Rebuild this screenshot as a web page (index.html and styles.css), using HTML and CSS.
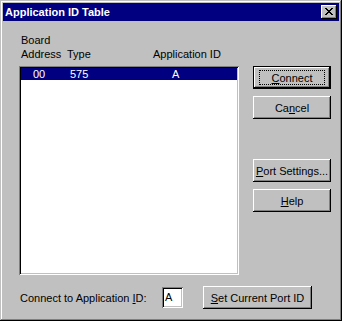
FILE: index.html
```html
<!DOCTYPE html>
<html>
    <head>
        <meta charset="utf-8">
        <title>Application ID Table</title>
        <link rel="stylesheet" href="styles.css">
    </head>
    <body>
        <div class="window">
            <div class="title_bar">
                <span class="title_text">Application ID Table</span>
                <span class="close_btn">
                    <svg width="8" height="7" viewBox="0 0 8 7">
                        <path d="M0 0h2v1h1v1h2v-1h1v-1h2v1h-1v1h-1v1h-1v1h1v1h1v1h1v1h-2v-1h-1v-1h-2v1h-1v1h-2v-1h1v-1h1v-1h1v-1h-1v-1h-1v-1h-1z" fill="#000"/>
                    </svg>
                </span>
            </div>
            <div class="content">
                <div class="main">
                    <div class="left">
                        <div class="head">
                            <div class="col_addr">Board<br>Address</div>
                            <div class="col_type">Type</div>
                            <div class="col_app">Application ID</div>
                        </div>
                        <div class="list">
                            <div class="row selected">
                                <span class="cell_addr">00</span>
                                <span class="cell_type">575</span>
                                <span class="cell_app">A</span>
                            </div>
                        </div>
                    </div>
                    <div class="right">
                        <div class="btn default"><span class="focus"><u>C</u>onnect</span></div>
                        <div class="btn">Ca<u>n</u>cel</div>
                        <div class="btn gap_top"><u>P</u>ort Settings...</div>
                        <div class="btn"><u>H</u>elp</div>
                    </div>
                </div>
                <div class="bottom">
                    <span class="label">Connect to Application <u>I</u>D:</span>
                    <span class="field">A</span>
                    <div class="btn wide"><u>S</u>et Current Port ID</div>
                </div>
            </div>
        </div>
    </body>
</html>
```
FILE: styles.css
```css
body {
    margin:0;
    background:#c0c0c0;
    font-family:"Liberation Sans", Arial, sans-serif;
    font-size:11px;
    color:#000;
}
.window {
    width:342px;
    height:321px;
    box-sizing:border-box;
    padding:3px;
    display:flex;
    flex-direction:column;
    background:#c0c0c0;
    box-shadow:inset -1px -1px #000, inset 1px 1px #c0c0c0, inset -2px -2px #808080, inset 2px 2px #fff;
}
.title_bar {
    height:18px;
    background:#000080;
    display:flex;
    align-items:center;
    justify-content:space-between;
    padding:0 2px 0 2px;
}
.title_text {
    color:#fff;
    font-weight:bold;
    font-size:11px;
}
.close_btn {
    width:16px;
    height:14px;
    box-sizing:border-box;
    background:#c0c0c0;
    display:flex;
    align-items:center;
    justify-content:center;
    box-shadow:inset -1px -1px #000, inset 1px 1px #fff, inset -2px -2px #808080;
}
.close_btn svg {
    display:block;
    margin:0 0 1px 0;
}
.content {
    flex:1;
    padding:12px 0 0 16px;
}
.main {
    display:flex;
}
.left {
    width:220px;
}
.head {
    display:flex;
    line-height:14px;
    align-items:flex-end;
}
.col_addr {
    width:46px;
    padding-left:2px;
}
.col_type {
    width:86px;
}
.list {
    margin-top:5px;
    height:209px;
    box-sizing:border-box;
    background:#fff;
    padding:2px;
    box-shadow:inset 1px 1px #808080, inset -1px -1px #fff, inset 2px 2px #000, inset -2px -2px #c0c0c0;
}
.row {
    height:12px;
    line-height:12px;
    display:flex;
}
.selected {
    background:#000080;
    color:#fff;
}
.cell_addr {
    width:37px;
    padding-left:12px;
}
.cell_type {
    width:102px;
}
.right {
    margin-left:14px;
    padding-top:33px;
    display:flex;
    flex-direction:column;
    gap:7px;
}
.btn {
    width:78px;
    height:23px;
    box-sizing:border-box;
    background:#c0c0c0;
    display:flex;
    align-items:center;
    justify-content:center;
    box-shadow:inset -1px -1px #000, inset 1px 1px #fff, inset -2px -2px #808080;
}
.btn.default {
    border:1px solid #000;
    box-shadow:inset -1px -1px #000, inset 1px 1px #fff, inset -2px -2px #808080;
}
.focus {
    display:flex;
    align-items:center;
    justify-content:center;
    width:64px;
    height:13px;
    border:1px dotted #000;
}
.gap_top {
    margin-top:33px;
}
.bottom {
    display:flex;
    align-items:center;
    margin-top:11px;
    padding-left:1px;
}
.label {
    width:142px;
}
.field {
    width:21px;
    height:21px;
    box-sizing:border-box;
    background:#fff;
    padding:4px 0 0 3px;
    line-height:13px;
    box-shadow:inset 1px 1px #808080, inset -1px -1px #fff, inset 2px 2px #000, inset -2px -2px #c0c0c0;
}
.btn.wide {
    width:109px;
    margin-left:20px;
}
```
